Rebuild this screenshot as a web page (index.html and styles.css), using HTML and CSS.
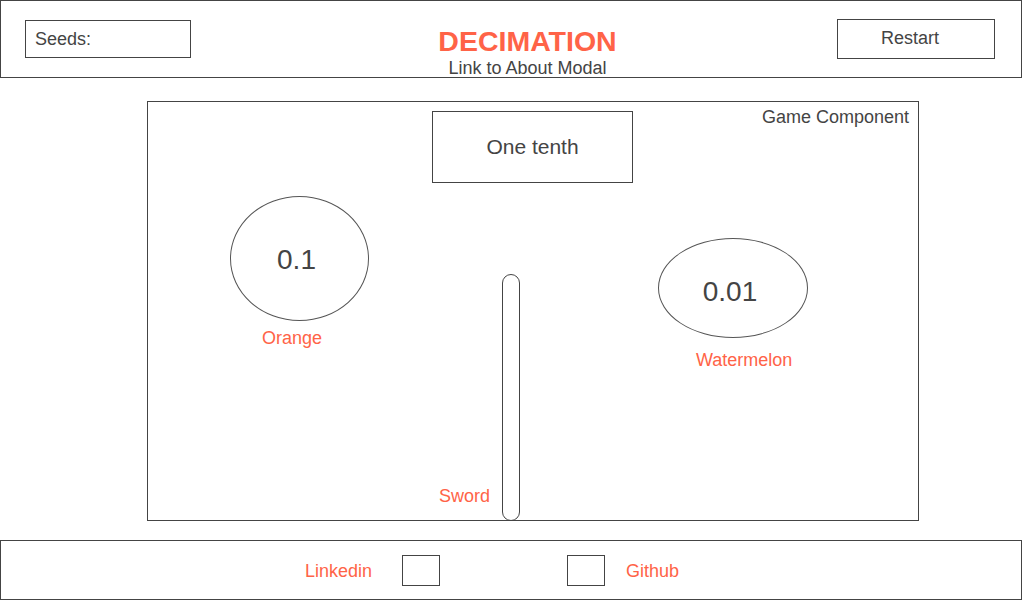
FILE: index.html
```html
<!DOCTYPE html>
<html lang="en">
<head>
<meta charset="utf-8">
<title>Decimation</title>
<link rel="stylesheet" href="styles.css">
</head>
<body>
<header class="header">
  <div class="seeds">Seeds:</div>
  <div class="title-block">
    <h1 class="title">DECIMATION</h1>
    <a class="about-link" href="#about">Link to About Modal</a>
  </div>
  <button class="restart" type="button">Restart</button>
</header>

<main class="game">
  <div class="game-label">Game Component</div>
  <div class="fraction-box">One tenth</div>

  <div class="fruit fruit-orange">0.1</div>
  <div class="piece-label label-orange">Orange</div>

  <div class="fruit fruit-watermelon">0.01</div>
  <div class="piece-label label-watermelon">Watermelon</div>

  <div class="sword"></div>
  <div class="piece-label label-sword">Sword</div>
</main>

<footer class="footer">
  <a class="footer-link" href="#linkedin">Linkedin</a>
  <span class="footer-icon icon-linkedin"></span>
  <span class="footer-icon icon-github"></span>
  <a class="footer-link link-github" href="#github">Github</a>
</footer>
</body>
</html>
```

FILE: styles.css
```css
* {
  box-sizing: border-box;
}

html, body {
  margin: 0;
  padding: 0;
  background: #ffffff;
}

body {
  width: 1024px;
  height: 600px;
  overflow: hidden;
  font-family: "Liberation Sans", Arial, sans-serif;
  font-size: 18px;
  line-height: 20px;
  color: #444444;
}

/* ---------- Header ---------- */
.header {
  display: flex;
  align-items: flex-start;
  width: 1022px;
  height: 78px;
  border: 1px solid #444444;
}

.seeds {
  width: 166px;
  height: 38px;
  margin-left: 24px;
  margin-top: 19px;
  padding-left: 9px;
  border: 1px solid #444444;
  line-height: 36px;
  font-size: 18px;
}

.title-block {
  flex: 1;
  padding-left: 27px;
  padding-top: 25px;
  text-align: center;
}

.title {
  margin: 0;
  font-size: 28.5px;
  line-height: 31px;
  font-weight: bold;
  color: #ff6347;
}

.about-link {
  display: block;
  margin-top: 1px;
  font-size: 18px;
  line-height: 20px;
  color: #444444;
  text-decoration: none;
}

.restart {
  width: 158px;
  height: 40px;
  margin-top: 18px;
  margin-right: 26px;
  padding: 0 0 2px 43px;
  border: 1px solid #444444;
  background: #ffffff;
  font-family: "Liberation Sans", Arial, sans-serif;
  font-size: 18px;
  line-height: 20px;
  color: #444444;
  text-align: left;
}

/* ---------- Game canvas ---------- */
.game {
  position: relative;
  width: 772px;
  height: 420px;
  margin: 23px 0 19px 147px;
  border: 1px solid #444444;
}

.game-label {
  padding: 5px 9px 0 0;
  text-align: right;
  font-size: 18px;
  line-height: 20px;
}

.fraction-box {
  position: absolute;
  left: 284px;
  top: 9px;
  width: 201px;
  height: 72px;
  display: flex;
  align-items: center;
  justify-content: center;
  border: 1px solid #444444;
  font-size: 21px;
}

.fruit {
  position: absolute;
  display: flex;
  align-items: center;
  justify-content: center;
  border: 1px solid #555555;
  border-radius: 50%;
  font-size: 28px;
  line-height: 32px;
}

.fruit-orange {
  left: 82px;
  top: 94px;
  width: 139px;
  height: 125px;
  padding-right: 6px;
  padding-top: 2px;
}

.fruit-watermelon {
  left: 510px;
  top: 136px;
  width: 150px;
  height: 100px;
  padding-right: 6px;
  padding-top: 7px;
}

.piece-label {
  position: absolute;
  font-size: 18px;
  line-height: 20px;
  color: #ff6347;
  white-space: nowrap;
}

.label-orange {
  left: 114px;
  top: 226px;
}

.label-watermelon {
  left: 548px;
  top: 248px;
}

.label-sword {
  left: 291px;
  top: 384px;
}

.sword {
  position: absolute;
  left: 354px;
  top: 172px;
  width: 18px;
  height: 247px;
  border: 1px solid #444444;
  border-radius: 9px;
}

/* ---------- Footer ---------- */
.footer {
  display: flex;
  align-items: center;
  width: 1022px;
  height: 60px;
  padding-left: 304px;
  padding-top: 1px;
  border: 1px solid #444444;
}

.footer-link {
  font-size: 18px;
  line-height: 20px;
  color: #ff6347;
  text-decoration: none;
}

.footer-icon {
  display: block;
  width: 38px;
  height: 31px;
  border: 1px solid #444444;
}

.icon-linkedin {
  margin-left: 30px;
}

.icon-github {
  margin-left: 127px;
}

.link-github {
  margin-left: 21px;
}
```
